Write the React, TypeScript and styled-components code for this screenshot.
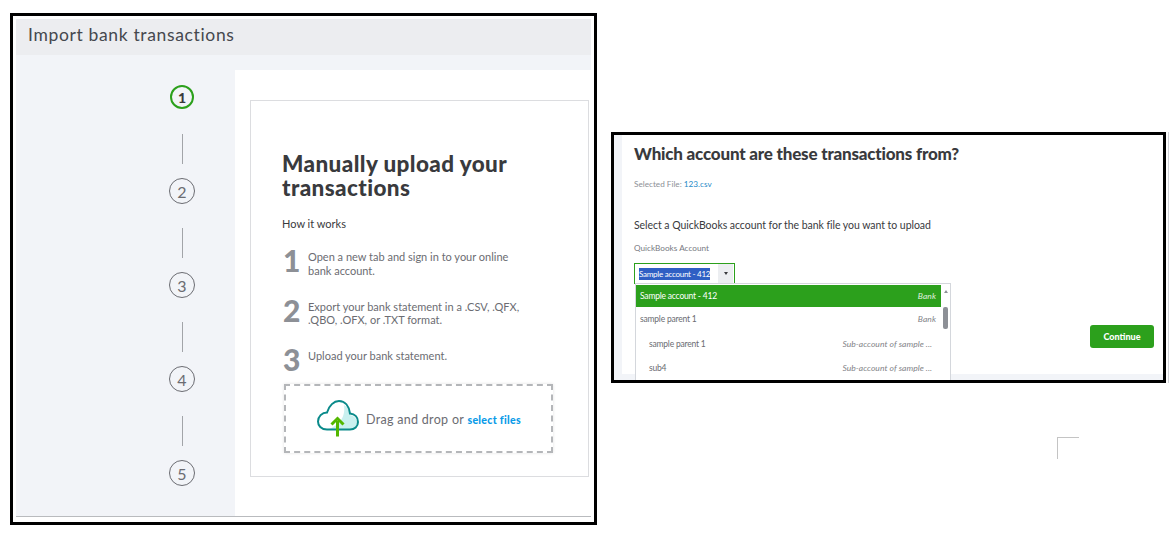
import React from 'react';
import styled, { createGlobalStyle } from 'styled-components';

const Global = createGlobalStyle`
  html, body {
    margin: 0;
    background: #fff;
    font-family: Lato, "Open Sans", sans-serif;
  }
`;

const Page = styled.div`
  width: 1175px;
  height: 534px;
  display: flex;
  align-items: flex-start;
  overflow: hidden;
`;

const ImportFrame = styled.div`
  box-sizing: border-box;
  width: 587px;
  height: 512px;
  margin: 13px 14px 0 10px;
  border: 3px solid #000;
  padding: 3px 3px 0 3px;
  background: #fff;
  display: flex;
  flex-direction: column;
  overflow: hidden;
`;

const PageTitle = styled.div`
  height: 36px;
  flex: none;
  background: #ecedf0;
  padding-left: 12px;
  font-size: 17.5px;
  line-height: 31px;
  letter-spacing: 0.65px;
  color: #45484e;
`;

const Body = styled.div`
  height: 461px;
  flex: none;
  display: flex;
  background: #f2f4f8;
  border-bottom: 1px solid #b9bbbe;
`;

const Sidebar = styled.div`
  width: 219px;
  flex: none;
  box-sizing: border-box;
  padding: 29px 40px 0 0;
  display: flex;
  flex-direction: column;
  align-items: flex-end;
`;

const Step = styled.div`
  width: 26px;
  height: 94px;
  flex: none;
  display: flex;
  flex-direction: column;
  align-items: center;
  &:last-child {
    height: 26px;
  }
`;

const StepCircle = styled.div<{ $active?: boolean }>`
  box-sizing: border-box;
  flex: none;
  width: ${p => (p.$active ? '24px' : '26px')};
  height: ${p => (p.$active ? '24px' : '26px')};
  margin-top: ${p => (p.$active ? '1px' : '0')};
  border-radius: 50%;
  border: ${p => (p.$active ? '2px solid #2ca01c' : '1px solid #6b6c72')};
  display: flex;
  align-items: center;
  justify-content: center;
  font-size: ${p => (p.$active ? '14px' : '16px')};
  font-weight: ${p => (p.$active ? 900 : 400)};
  color: ${p => (p.$active ? '#393a3d' : '#6b6c72')};
`;

const StepLine = styled.div<{ $gap: number }>`
  width: 1px;
  height: 30px;
  margin-top: ${p => p.$gap}px;
  background: #a2a4a8;
`;

const Main = styled.div`
  flex: 1;
  margin-top: 15px;
  padding: 30px 0 0 15px;
  background: #fff;
`;

const Card = styled.div`
  box-sizing: border-box;
  width: 339px;
  height: 377px;
  border: 1px solid #dcdde0;
  padding: 51px 0 0 31px;
`;

const Heading = styled.h1`
  margin: 0;
  font-size: 22.5px;
  line-height: 24px;
  font-weight: 900;
  letter-spacing: 0.4px;
  color: #393a3d;
`;

const HowItWorks = styled.div`
  margin-top: 17px;
  font-size: 11px;
  line-height: 14px;
  color: #393a3d;
`;

const Instructions = styled.div`
  margin-top: 19px;
  display: flex;
  flex-direction: column;
`;

const Instruction = styled.div`
  height: 49.5px;
  display: flex;
`;

const Digit = styled.div`
  width: 25px;
  height: 24px;
  flex: none;
  font-size: 30px;
  line-height: 20px;
  font-weight: 900;
  color: #8d9096;
  padding-left: 1px;
  box-sizing: border-box;
`;

const InstructionText = styled.div`
  width: 225px;
  margin-left: 1px;
  font-size: 11px;
  line-height: 13.5px;
  color: #6b6c72;
`;

const DropZone = styled.div`
  box-sizing: border-box;
  width: 269px;
  height: 69px;
  margin: -15px 0 0 2px;
  border: 2px dashed #b4b6b9;
  box-shadow: 0 0 3px rgba(0, 0, 0, 0.12);
  padding-left: 31px;
  display: flex;
  align-items: center;
  gap: 7px;
  font-size: 12.5px;
  letter-spacing: 0.3px;
  color: #6b6c72;
`;

const DropLabel = styled.span`
  padding-top: 2px;
`;

const SelectFiles = styled.span`
  font-size: 10.6px;
  font-weight: 900;
  color: #0a9be8;
`;

const RightColumn = styled.div`
  width: 555px;
  flex: none;
  margin-top: 132px;
`;

const AccountFrame = styled.div`
  box-sizing: border-box;
  width: 555px;
  height: 251px;
  border: 3px solid #000;
  box-shadow: 2px 0 0 #fff, 3px 0 0 #cfd1d6;
  background: #f2f4f8;
  display: flex;
  overflow: hidden;
`;

const AccountPanel = styled.div`
  box-sizing: border-box;
  margin-left: 8px;
  flex: 1;
  height: 239px;
  background: #fff;
  padding: 8px 9px 0 12px;
`;

const AccountTitle = styled.h2`
  margin: 0;
  font-size: 17px;
  line-height: 22px;
  font-weight: 900;
  letter-spacing: -0.2px;
  color: #393a3d;
`;

const SelectedFile = styled.div`
  margin-top: 13px;
  font-size: 8.2px;
  line-height: 12px;
  color: #8d9096;
`;

const FileName = styled.span`
  color: #1f8ac7;
`;

const Prompt = styled.div`
  margin-top: 27px;
  font-size: 10.5px;
  line-height: 16px;
  letter-spacing: -0.05px;
  color: #393a3d;
`;

const FieldLabel = styled.div`
  margin-top: 9px;
  font-size: 8.2px;
  line-height: 12px;
  color: #77797f;
`;

const FieldRow = styled.div`
  margin-top: 9px;
  display: flex;
  justify-content: space-between;
  align-items: flex-start;
`;

const Combo = styled.div`
  box-sizing: border-box;
  width: 101px;
  height: 21px;
  border: 1px solid #2ca01c;
  display: flex;
  align-items: center;
  position: relative;
  padding-left: 4px;
  font-size: 8px;
  letter-spacing: -0.25px;
`;

const ComboText = styled.span`
  background: #2f5fc4;
  color: #fff;
  line-height: 12px;
  white-space: nowrap;
`;

const ComboArrow = styled.div`
  margin: 0 1px 0 auto;
  width: 15px;
  height: 19px;
  background: #eceef1;
  display: flex;
  align-items: center;
  justify-content: center;
  &::after {
    content: '';
    border-left: 2.5px solid transparent;
    border-right: 2.5px solid transparent;
    border-top: 3px solid #393a3d;
  }
`;

const Menu = styled.div`
  position: absolute;
  left: 0;
  top: 19px;
  box-sizing: border-box;
  width: 316px;
  height: 100px;
  background: #fff;
  border: 1px solid #d4d7dc;
  padding-top: 1px;
  display: flex;
  z-index: 2;
`;

const MenuList = styled.div`
  flex: 1;
  min-width: 0;
`;

const MenuRow = styled.div<{ $selected?: boolean; $indent?: boolean }>`
  box-sizing: border-box;
  height: ${p => (p.$selected ? '22px' : '24.5px')};
  padding: 0 ${p => (p.$indent ? '9px' : '5px')} 0 ${p => (p.$indent ? '13px' : '4px')};
  display: flex;
  justify-content: space-between;
  align-items: center;
  font-size: 8.5px;
  letter-spacing: -0.2px;
  background: ${p => (p.$selected ? '#2ca01c' : '#fff')};
  color: ${p => (p.$selected ? '#fff' : '#6b6c72')};
`;

const MenuType = styled.span`
  font-style: italic;
  letter-spacing: 0.05px;
  opacity: 0.85;
`;

const ScrollTrack = styled.div`
  width: 9px;
  flex: none;
  display: flex;
  flex-direction: column;
  align-items: center;
  padding-top: 5px;
  box-sizing: border-box;
  &::before {
    content: '';
    border-left: 2.5px solid transparent;
    border-right: 2.5px solid transparent;
    border-bottom: 3px solid #8d9096;
  }
`;

const ScrollThumb = styled.div`
  width: 5px;
  height: 22px;
  margin-top: 14px;
  background: #8d9096;
  border-radius: 2px;
`;

const ContinueButton = styled.button`
  width: 64px;
  height: 23px;
  margin-top: 62px;
  border: 0;
  border-radius: 3px;
  padding: 0;
  background: #2ca01c;
  color: #fff;
  font-family: inherit;
  font-size: 9px;
  font-weight: 900;
`;

const CropMark = styled.div`
  width: 21px;
  height: 21px;
  margin: 54px 0 0 446px;
  border-top: 1px solid #c4c4c4;
  border-left: 1px solid #c4c4c4;
`;

const CloudIcon = () => (
  <svg width="42" height="38" viewBox="0 0 42 38" fill="none">
    <path d="M12 30 C20 27 29 20 27 6 C32 9 33 13 33 16 C37 17 40 20 40 23 C40 27 37 30 33 30 Z" fill="#c9f0ef" />
    <path
      d="M10 30.5 C4 30.5 1 26.5 1 22.5 C1 17.5 5 13.5 10 13.5 C12 6.5 17 2 22 2 C28 2 32 7 33 14.5 C38 15 41 18.5 41 23 C41 27.5 37.5 30.5 33 30.5 Z"
      stroke="#0a8a8a"
      strokeWidth="2"
    />
    <path d="M20.5 37.5 V22 M14.5 25.5 L20.5 19.5 L26.5 25.5" stroke="#53b700" strokeWidth="3" />
  </svg>
);

const STEPS = [1, 2, 3, 4, 5];

const INSTRUCTIONS = [
  { n: 1, lines: ['Open a new tab and sign in to your online', 'bank account.'] },
  { n: 2, lines: ['Export your bank statement in a .CSV, .QFX,', '.QBO, .OFX, or .TXT format.'] },
  { n: 3, lines: ['Upload your bank statement.'] },
];

const ACCOUNTS = [
  { name: 'sample parent 1', type: 'Bank', indent: false },
  { name: 'sample parent 1', type: 'Sub-account of sample ...', indent: true },
  { name: 'sub4', type: 'Sub-account of sample ...', indent: true },
];

const App: React.FC = () => (
  <Page>
    <Global />
    <ImportFrame>
      <PageTitle>Import bank transactions</PageTitle>
      <Body>
        <Sidebar>
          {STEPS.map(n => (
            <Step key={n}>
              <StepCircle $active={n === 1}>{n}</StepCircle>
              {n < 5 && <StepLine $gap={n === 1 ? 25 : 24} />}
            </Step>
          ))}
        </Sidebar>
        <Main>
          <Card>
            <Heading>
              Manually upload your
              <br />
              transactions
            </Heading>
            <HowItWorks>How it works</HowItWorks>
            <Instructions>
              {INSTRUCTIONS.map(item => (
                <Instruction key={item.n}>
                  <Digit>{item.n}</Digit>
                  <InstructionText>
                    {item.lines.map(line => (
                      <div key={line}>{line}</div>
                    ))}
                  </InstructionText>
                </Instruction>
              ))}
            </Instructions>
            <DropZone>
              <CloudIcon />
              <DropLabel>
                Drag and drop or <SelectFiles>select files</SelectFiles>
              </DropLabel>
            </DropZone>
          </Card>
        </Main>
      </Body>
    </ImportFrame>
    <RightColumn>
      <AccountFrame>
        <AccountPanel>
          <AccountTitle>Which account are these transactions from?</AccountTitle>
          <SelectedFile>
            Selected File: <FileName>123.csv</FileName>
          </SelectedFile>
          <Prompt>Select a QuickBooks account for the bank file you want to upload</Prompt>
          <FieldLabel>QuickBooks Account</FieldLabel>
          <FieldRow>
            <Combo>
              <ComboText>Sample account - 412</ComboText>
              <ComboArrow />
              <Menu>
                <MenuList>
                  <MenuRow $selected>
                    <span>Sample account - 412</span>
                    <MenuType>Bank</MenuType>
                  </MenuRow>
                  {ACCOUNTS.map(a => (
                    <MenuRow key={a.name + a.type} $indent={a.indent}>
                      <span>{a.name}</span>
                      <MenuType>{a.type}</MenuType>
                    </MenuRow>
                  ))}
                </MenuList>
                <ScrollTrack>
                  <ScrollThumb />
                </ScrollTrack>
              </Menu>
            </Combo>
            <ContinueButton>Continue</ContinueButton>
          </FieldRow>
        </AccountPanel>
      </AccountFrame>
      <CropMark />
    </RightColumn>
  </Page>
);

export default App;
